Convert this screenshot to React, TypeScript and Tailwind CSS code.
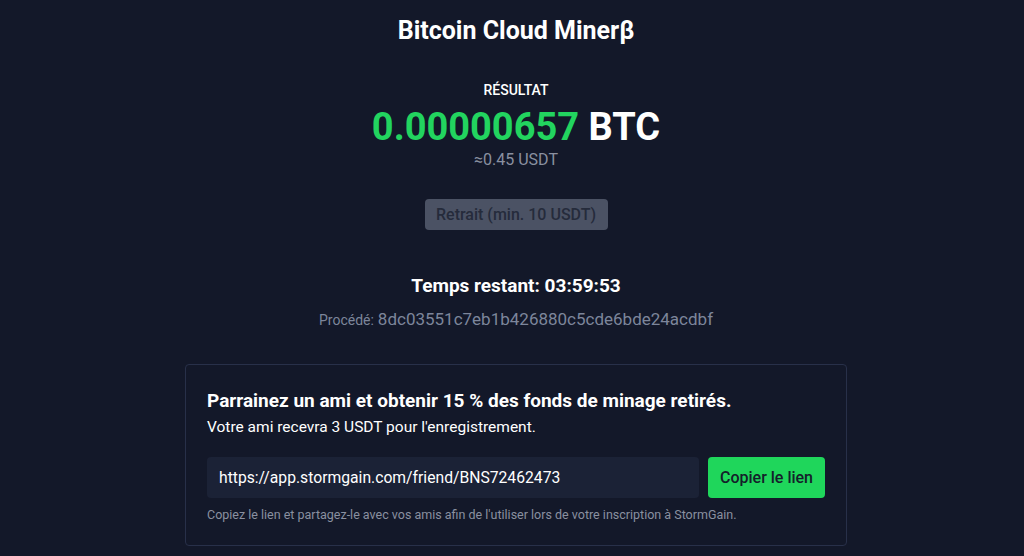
export default function App() {
  return (
    <div
      className="min-h-[556px] w-full bg-[#131829] pl-2 text-white"
      style={{ fontFamily: "Roboto, 'Liberation Sans', sans-serif" }}
    >
      <div className="flex flex-col items-center">
        <h1 className="mt-[16px] text-[25px] font-bold leading-[30px]">Bitcoin Cloud Minerβ</h1>

        <div className="mt-[35px] text-[14px] font-medium leading-[18px]">RÉSULTAT</div>
        <div className="mt-[6px] text-[38px] font-bold leading-[44px]">
          <span className="text-[#22d45f]">0.00000657</span> BTC
        </div>
        <div className="mt-[1px] text-[16px] leading-[20px] text-[#8a90a0]">≈0.45 USDT</div>

        <button className="mt-[29px] h-[31px] w-[183px] rounded-[4px] bg-[#4b5264] text-[16px] font-medium text-[#252b3b]">
          Retrait (min. 10 USDT)
        </button>

        <div className="mt-[44px] text-[19px] font-bold leading-[24px]">Temps restant: 03:59:53</div>
        <div className="mt-[9px] flex h-[22px] items-baseline gap-[4px] text-[#7d869b]">
          <span className="text-[14px]">Procédé:</span>
          <span className="text-[17px]">8dc03551c7eb1b426880c5cde6bde24acdbf</span>
        </div>

        <div className="mt-[35px] w-[662px] rounded-[4px] border border-[#283049] bg-[#131829] px-[21px] pb-[22px] pt-[24px]">
          <div className="text-[19px] font-bold leading-[24px]">
            Parrainez un ami et obtenir 15 % des fonds de minage retirés.
          </div>
          <div className="mt-[4px] text-[15.5px] leading-[20px]">Votre ami recevra 3 USDT pour l'enregistrement.</div>
          <div className="mt-[20px] flex gap-[9px]">
            <div className="flex h-[41px] flex-1 items-center rounded-[4px] bg-[#1b2236] px-[12px] text-[15.7px]">
              https://app.stormgain.com/friend/BNS72462473
            </div>
            <button className="h-[41px] w-[117px] rounded-[4px] bg-[#1fd65b] text-[16px] font-medium text-[#14202a]">
              Copier le lien
            </button>
          </div>
          <div className="mt-[9px] text-[12.5px] leading-[16px] text-[#8a90a0]">
            Copiez le lien et partagez-le avec vos amis afin de l'utiliser lors de votre inscription à StormGain.
          </div>
        </div>
      </div>
    </div>
  );
}
